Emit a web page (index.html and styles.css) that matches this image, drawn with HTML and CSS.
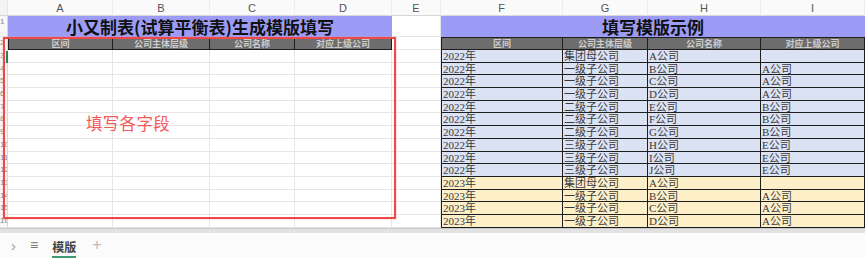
FILE: index.html
```html
<!DOCTYPE html>
<html lang="zh-CN">
<head>
  <meta charset="UTF-8">
  <title>模版</title>
  <link rel="stylesheet" href="styles.css">
</head>
<body>

  <div class="sheet" id="sheet">
    <div class="frame"></div>
    <div class="frame-label">填写各字段</div>
    <div class="cursor"></div>
  </div>

  <div class="scrollbar"></div>

  <div class="tabs">
    <span class="tab-arrow">&#8250;</span>
    <span class="tab-menu">&#8801;</span>
    <span class="tab active">模版</span>
    <span class="tab-add">+</span>
  </div>

  <script>
    const sheet = document.getElementById('sheet');
    const letters = ['', 'A', 'B', 'C', 'D', 'E', 'F', 'G', 'H', 'I'];
    const heads = ['区间', '公司主体层级', '公司名称', '对应上级公司'];
    const rows = [
      ['2022年', '集团母公司', 'A公司', ''],
      ['2022年', '一级子公司', 'B公司', 'A公司'],
      ['2022年', '一级子公司', 'C公司', 'A公司'],
      ['2022年', '一级子公司', 'D公司', 'A公司'],
      ['2022年', '二级子公司', 'E公司', 'B公司'],
      ['2022年', '二级子公司', 'F公司', 'B公司'],
      ['2022年', '二级子公司', 'G公司', 'B公司'],
      ['2022年', '三级子公司', 'H公司', 'E公司'],
      ['2022年', '三级子公司', 'I公司', 'E公司'],
      ['2022年', '三级子公司', 'J公司', 'E公司'],
      ['2023年', '集团母公司', 'A公司', ''],
      ['2023年', '一级子公司', 'B公司', 'A公司'],
      ['2023年', '一级子公司', 'C公司', 'A公司'],
      ['2023年', '一级子公司', 'D公司', 'A公司']
    ];

    function cell(cls, text, span) {
      const div = document.createElement('div');
      div.className = 'cell ' + cls;
      div.textContent = text || '';
      if (span) div.style.gridColumn = 'span ' + span;
      sheet.appendChild(div);
    }

    // column letters
    letters.forEach((l, i) => cell(i === 0 ? 'corner' : 'col-head', l));

    // row 1: titles
    cell('rn', '1');
    cell('title', '小又制表(试算平衡表)生成模版填写', 4);
    cell('blank', '');
    cell('title', '填写模版示例', 4);

    // row 2: table heads
    cell('rn', '2');
    heads.forEach((h, i) => cell('th' + (i === 0 ? ' first' : ''), h));
    cell('blank', '');
    heads.forEach((h, i) => cell('th' + (i === 0 ? ' first' : ''), h));

    // rows 3..16
    rows.forEach((r, n) => {
      cell('rn', String(n + 3));
      for (let i = 0; i < 5; i++) cell('blank', '');
      const tone = r[0] === '2023年' ? 'yellow' : 'blue';
      r.forEach((v, i) => cell('td ' + tone + (i === 0 ? ' first' : ''), v));
    });
  </script>

</body>
</html>
```

FILE: styles.css
```css
body {
  margin: 0;
  padding: 0;
  width: 865px;
  height: 258px;
  overflow: hidden;
  background: #fff;
  font-family: "Liberation Sans", "Noto Sans CJK SC", sans-serif;
}
.sheet {
  position: relative;
  display: grid;
  grid-template-columns: 8px 105px 97px 85px 97px 49px 122px 85px 113px 104px;
  grid-template-rows: 16px 21px 13px repeat(14, 12.7px);
}
.cell {
  box-sizing: border-box;
  overflow: hidden;
  white-space: nowrap;
  border-right: 1px solid #e6e6e6;
  border-bottom: 1px solid #e6e6e6;
  font-size: 11px;
}
.corner {
  background: #f4f4f4;
  border-bottom: 1px solid #d8d8d8;
}
.col-head {
  background: #fafafa;
  color: #555;
  text-align: center;
  line-height: 16px;
  font-size: 11px;
  border-bottom: 1px solid #d8d8d8;
  border-right: 1px solid #ececec;
}
.rn {
  background: #f7f7f7;
  color: #888;
  font-size: 8px;
  text-align: left;
  line-height: 12px;
  border-right: 1px solid #d8d8d8;
}
.title {
  overflow: visible;
  background: #9c9cf7;
  color: #111;
  font-family: "Noto Sans CJK SC", sans-serif;
  font-weight: bold;
  font-size: 17px;
  line-height: 21px;
  text-align: center;
  border-right: none;
  border-bottom: none;
}
.th {
  overflow: visible;
  background: #6d6d6d;
  color: #cdcdcd;
  font-family: "Noto Sans CJK SC", sans-serif;
  font-weight: bold;
  font-size: 9px;
  line-height: 11px;
  text-align: center;
  border-top: 1px solid #1e1e1e;
  border-right: 1px solid #1e1e1e;
  border-bottom: 1px solid #1e1e1e;
}
.th.first,
.td.first {
  border-left: 1px solid #1e1e1e;
}
.td {
  color: #3a3a3a;
  font-family: "Liberation Serif", "Noto Sans CJK SC", serif;
  font-size: 11px;
  line-height: 12px;
  padding-left: 1px;
  border-right: 1px solid #1e1e1e;
  border-bottom: 1px solid #1e1e1e;
}
.blue {
  background: #dae2f4;
}
.yellow {
  background: #fdf0c9;
}
.frame {
  position: absolute;
  left: 3px;
  top: 37px;
  width: 389px;
  height: 178px;
  border: 2px solid #f14747;
  box-shadow: 0 0 1px #f88;
  pointer-events: none;
}
.frame-label {
  position: absolute;
  left: 86px;
  top: 111px;
  color: #f25a5a;
  font-family: "Noto Sans CJK SC", sans-serif;
  font-size: 16.5px;
  letter-spacing: 0.3px;
}
.cursor {
  position: absolute;
  left: 6px;
  top: 51px;
  width: 2px;
  height: 12px;
  background: #1f8a4c;
}
.scrollbar {
  height: 4px;
  background: #e2e2e2;
  border-top: 1px solid #c9c9c9;
}
.tabs {
  display: flex;
  align-items: center;
  height: 25px;
  background: #fbfbfb;
  color: #9a9a9a;
  font-size: 13px;
}
.tab-arrow {
  margin-left: 11px;
  font-size: 15px;
}
.tab-menu {
  margin-left: 14px;
  font-size: 14px;
  color: #777;
}
.tab {
  margin-left: 14px;
  height: 25px;
  line-height: 27px;
  color: #444;
  font-family: "Noto Sans CJK SC", sans-serif;
  font-weight: bold;
  font-size: 12px;
  box-sizing: border-box;
  border-bottom: 2px solid #3d9b72;
}
.tab-add {
  margin-left: 16px;
  font-size: 16px;
  color: #bbb;
}
```
